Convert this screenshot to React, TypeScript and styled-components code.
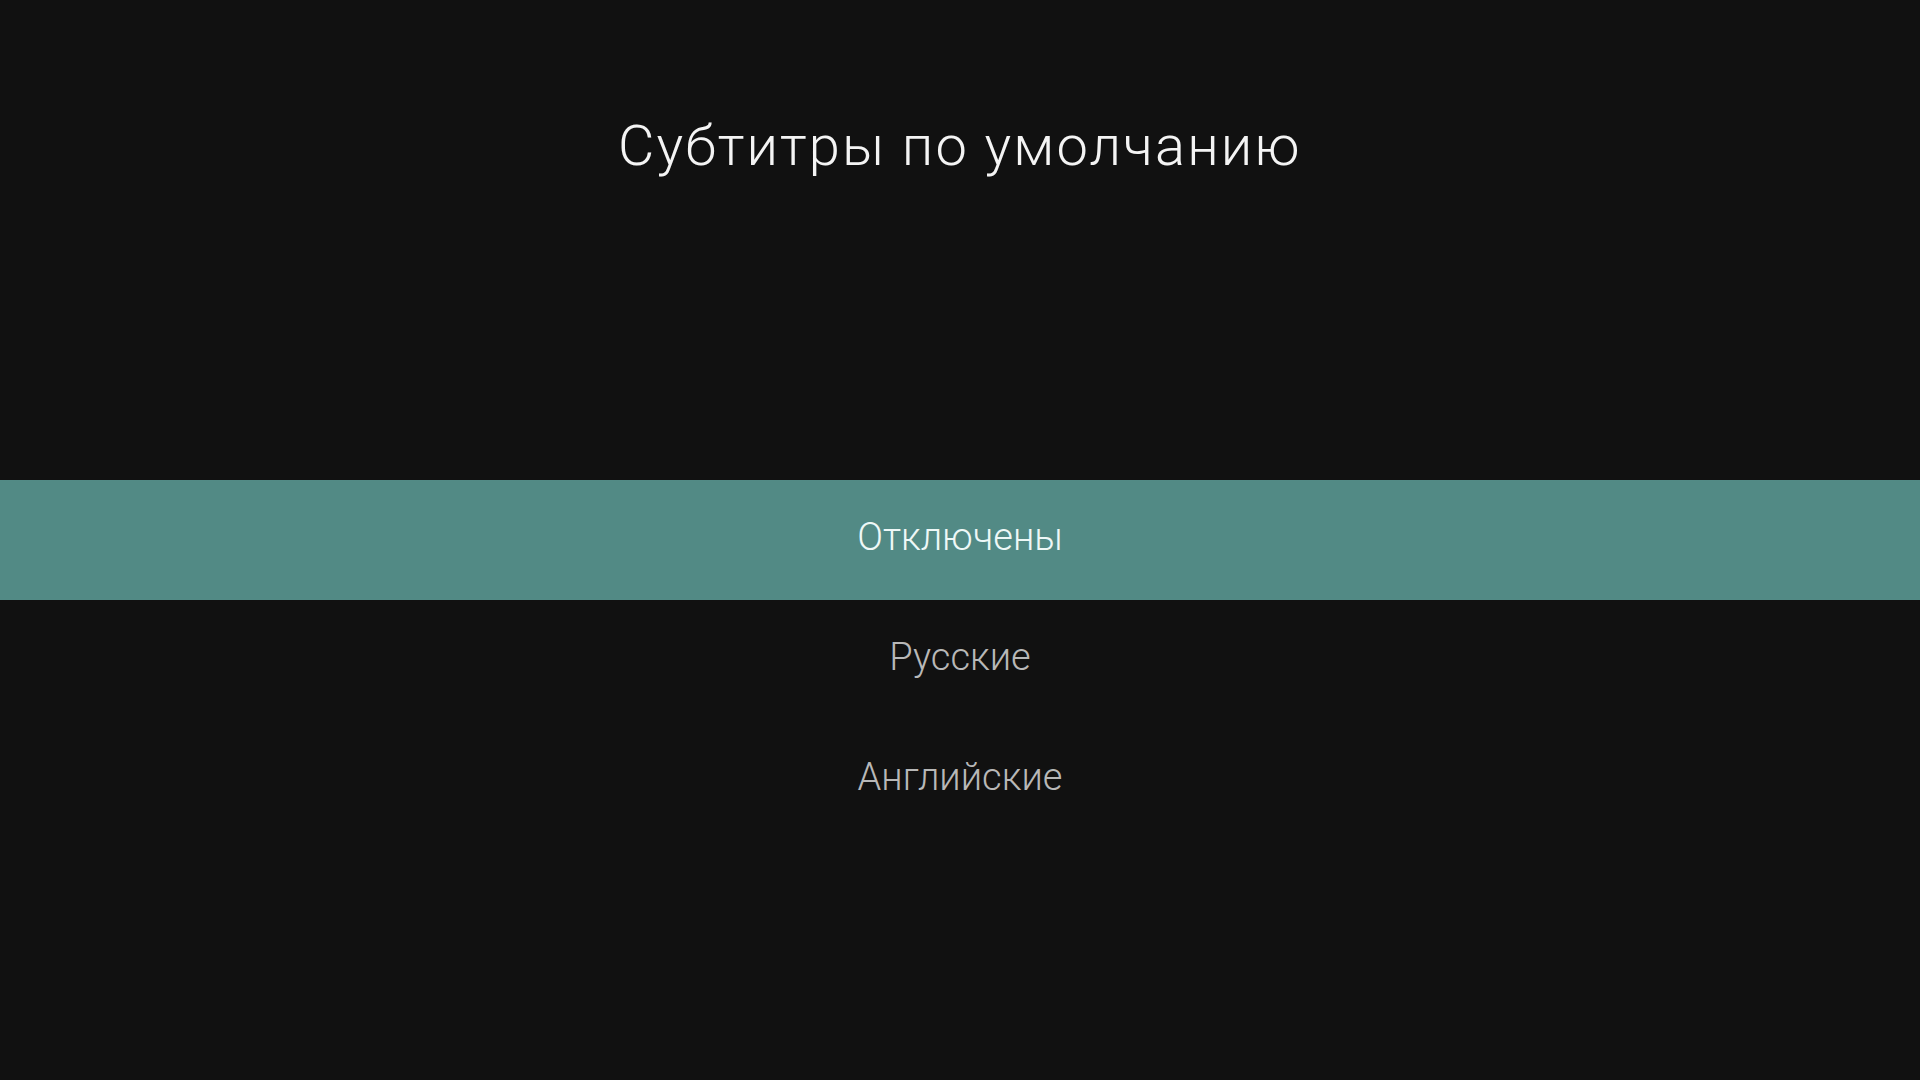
import React from "react";
import styled, { createGlobalStyle } from "styled-components";

const Global = createGlobalStyle`
  html, body {
    margin: 0;
    padding: 0;
    background: #111111;
  }
  body {
    font-family: Roboto, "Noto Sans", sans-serif;
    -webkit-font-smoothing: antialiased;
  }
`;

const Screen = styled.div`
  width: 1920px;
  height: 1080px;
  background: #111111;
  display: flex;
  flex-direction: column;
  align-items: stretch;
  overflow: hidden;
`;

const Title = styled.h1`
  margin: 0;
  padding-top: 113px;
  font-family: Roboto, sans-serif;
  font-weight: 300;
  font-size: 56px;
  line-height: 66px;
  letter-spacing: 2.1px;
  color: #f4f4f4;
  text-align: center;
`;

const OptionList = styled.ul`
  list-style: none;
  margin: 301px 0 0;
  padding: 0;
  display: flex;
  flex-direction: column;
`;

const Option = styled.li<{ $selected?: boolean }>`
  height: 120px;
  line-height: 114px;
  text-align: center;
  font-family: Roboto, sans-serif;
  font-weight: 300;
  font-size: 38px;
  color: ${(p) => (p.$selected ? "#eef8f7" : "#b8b8b8")};
  background: ${(p) => (p.$selected ? "#528a85" : "transparent")};
`;

const options = ["Отключены", "Русские", "Английские"];

export default function App() {
  return (
    <>
      <Global />
      <Screen>
        <Title>Субтитры по умолчанию</Title>
        <OptionList>
          {options.map((o, i) => (
            <Option key={o} $selected={i === 0}>
              {o}
            </Option>
          ))}
        </OptionList>
      </Screen>
    </>
  );
}
